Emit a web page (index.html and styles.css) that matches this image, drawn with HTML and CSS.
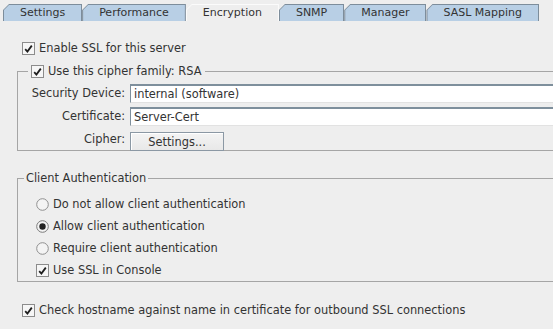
FILE: index.html
```html
<!DOCTYPE html>
<html>
<head>
<meta charset="utf-8">
<link rel="stylesheet" href="styles.css">
</head>
<body>
<div class="tabs">
  <div class="tab"><span>Settings</span></div>
  <div class="tab"><span>Performance</span></div>
  <div class="tab active"><span>Encryption</span></div>
  <div class="tab"><span>SNMP</span></div>
  <div class="tab"><span>Manager</span></div>
  <div class="tab"><span>SASL Mapping</span></div>
</div>
<div class="panel">
  <div class="check first">
    <svg class="box" width="13" height="13" viewBox="0 0 13 13"><rect x="0.5" y="0.5" width="12" height="12" fill="#f6f6f6" stroke="#8c8c8c"/><path d="M3.2 7.2 L5.4 9.6 L9.8 3.6" fill="none" stroke="#1e1e1e" stroke-width="1.8"/></svg>
    <span>Enable SSL for this server</span>
  </div>

  <fieldset class="group cipher">
    <legend>
      <span class="check">
        <svg class="box" width="13" height="13" viewBox="0 0 13 13"><rect x="0.5" y="0.5" width="12" height="12" fill="#f6f6f6" stroke="#8c8c8c"/><path d="M3.2 7.2 L5.4 9.6 L9.8 3.6" fill="none" stroke="#1e1e1e" stroke-width="1.8"/></svg>
        <span>Use this cipher family: RSA</span>
      </span>
    </legend>
    <div class="form">
      <span class="lbl">Security Device:</span>
      <div class="field">internal (software)</div>
      <span class="lbl">Certificate:</span>
      <div class="field">Server-Cert</div>
      <span class="lbl">Cipher:</span>
      <div><button class="btn">Settings...</button></div>
    </div>
  </fieldset>

  <fieldset class="group auth">
    <legend>Client Authentication</legend>
    <div class="options">
      <div class="check">
        <svg class="radio" width="13" height="13" viewBox="0 0 13 13"><circle cx="6.5" cy="6.5" r="5.8" fill="#f4f4f4" stroke="#8f8f8f"/></svg>
        <span>Do not allow client authentication</span>
      </div>
      <div class="check">
        <svg class="radio" width="13" height="13" viewBox="0 0 13 13"><circle cx="6.5" cy="6.5" r="5.8" fill="#f4f4f4" stroke="#7a7a7a"/><circle cx="6.5" cy="6.5" r="3.2" fill="#222"/></svg>
        <span>Allow client authentication</span>
      </div>
      <div class="check">
        <svg class="radio" width="13" height="13" viewBox="0 0 13 13"><circle cx="6.5" cy="6.5" r="5.8" fill="#f4f4f4" stroke="#8f8f8f"/></svg>
        <span>Require client authentication</span>
      </div>
      <div class="check">
        <svg class="box" width="13" height="13" viewBox="0 0 13 13"><rect x="0.5" y="0.5" width="12" height="12" fill="#f6f6f6" stroke="#8c8c8c"/><path d="M3.2 7.2 L5.4 9.6 L9.8 3.6" fill="none" stroke="#1e1e1e" stroke-width="1.8"/></svg>
        <span>Use SSL in Console</span>
      </div>
    </div>
  </fieldset>

  <div class="check last">
    <svg class="box" width="13" height="13" viewBox="0 0 13 13"><rect x="0.5" y="0.5" width="12" height="12" fill="#f6f6f6" stroke="#8c8c8c"/><path d="M3.2 7.2 L5.4 9.6 L9.8 3.6" fill="none" stroke="#1e1e1e" stroke-width="1.8"/></svg>
    <span>Check hostname against name in certificate for outbound SSL connections</span>
  </div>
</div>
</body>
</html>
```

FILE: styles.css
```css
html, body {
  margin: 0;
  padding: 0;
  background: #eeeeee;
  overflow: hidden;
}
body {
  width: 553px;
  height: 329px;
  font-family: "DejaVu Sans", sans-serif;
  font-size: 11.4px;
  color: #333333;
}

/* tabs */
.tabs {
  display: flex;
  align-items: flex-end;
  height: 21px;
  box-sizing: border-box;
  padding: 4px 0 0 3px;
}
.tab {
  height: 17px;
  box-sizing: border-box;
  padding: 1px 1px 0 1px;
  background: #7d8d9b;
  clip-path: polygon(0 6px, 6px 0, 100% 0, 100% 100%, 0 100%);
}
.tab span {
  display: block;
  height: 16px;
  line-height: 16px;
  padding: 0 16px;
  font-size: 11px;
  background: #b8cfe5;
  clip-path: polygon(0 5px, 5px 0, 100% 0, 100% 100%, 0 100%);
}
.tab.active {
  background: #fbfbfb;
}
.tab.active span {
  background: #eeeeee;
}

/* panel */
.panel {
  padding: 0 0 0 17px;
}
.check {
  display: flex;
  align-items: center;
  gap: 4px;
  height: 16px;
  white-space: nowrap;
}
.check svg {
  flex: none;
}
.first {
  margin: 19px 0 0 5px;
}
.last {
  margin: 20px 0 0 5px;
}

.group {
  margin: 0;
  padding: 0;
  border: 1px solid #a5a5a5;
  border-right: none;
  min-width: 0;
}
.cipher {
  margin-top: 7px;
  height: 88px;
  box-sizing: border-box;
}
.cipher legend {
  margin-left: 10px;
  padding: 0 4px 0 3px;
}
.auth {
  margin: 19px 0 0 0;
  height: 112px;
  box-sizing: border-box;
}
.auth legend {
  margin-left: 6px;
  padding: 0 2px;
  line-height: 16px;
}

.form {
  display: grid;
  grid-template-columns: 107px 1fr;
  grid-auto-rows: 19px;
  column-gap: 5px;
  row-gap: 4px;
  margin-top: 5px;
}
.lbl {
  text-align: right;
  line-height: 19px;
}
.field {
  background: #ffffff;
  border-top: 2px solid #7e8f9c;
  border-left: 1px solid #7e8f9c;
  border-bottom: 1px solid #e2e2e2;
  box-sizing: border-box;
  height: 19px;
  line-height: 16px;
  padding-left: 3px;
}
.btn {
  margin-top: 2px;
  width: 94px;
  height: 19px;
  padding: 0;
  font: inherit;
  color: #333333;
  background: linear-gradient(#f4f4f4, #e8e8e8);
  border: 1px solid #8b98a4;
  box-shadow: inset 1px 1px 0 #ffffff;
}
.options {
  display: flex;
  flex-direction: column;
  gap: 6px;
  padding: 10px 0 0 18px;
}
```
